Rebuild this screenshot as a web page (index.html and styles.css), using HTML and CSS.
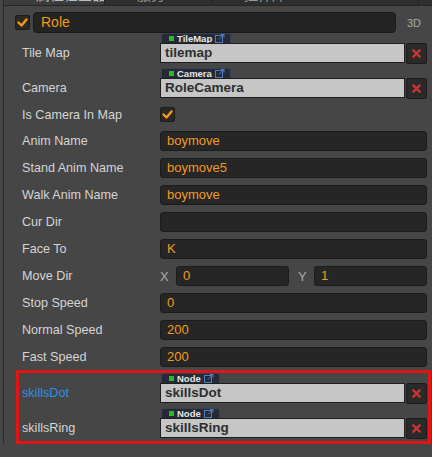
FILE: index.html
```html
<!DOCTYPE html>
<html>
<head>
<meta charset="utf-8">
<link rel="stylesheet" href="styles.css">
</head>
<body>
<div class="frame">
  <div class="tabbar">
    <div class="tab active"><span class="tab-ico ring"></span>属性检查器</div>
    <div class="tab"><span class="tab-ico grid"></span>服务</div>
    <div class="tab"><span class="tab-ico box"></span>控件库</div>
  </div>
  <div class="panel">
    <div class="header">
      <span class="check"><svg viewBox="0 0 15 15" width="15" height="15"><polyline points="3.5,7.5 6.5,10.5 11.5,4.5" /></svg></span>
      <div class="name">Role</div>
      <span class="mode">3D</span>
    </div>

    <div class="row obj first">
      <div class="label">Tile Map</div>
      <div class="val">
        <span class="tag"><i class="dot"></i>TileMap<svg class="link" viewBox="0 0 10 9" width="10" height="9"><rect x="0.5" y="1.5" width="7" height="7" /><path d="M4 5.5 L9 0.5 M6 0.5 H9 V3.5" /></svg></span>
        <div class="objline"><div class="objfield">tilemap</div><span class="del"><svg viewBox="0 0 10 10" width="9" height="9"><path d="M1.5 1.5 L8.5 8.5 M8.5 1.5 L1.5 8.5" /></svg></span></div>
      </div>
    </div>

    <div class="row obj">
      <div class="label">Camera</div>
      <div class="val">
        <span class="tag"><i class="dot"></i>Camera<svg class="link" viewBox="0 0 10 9" width="10" height="9"><rect x="0.5" y="1.5" width="7" height="7" /><path d="M4 5.5 L9 0.5 M6 0.5 H9 V3.5" /></svg></span>
        <div class="objline"><div class="objfield">RoleCamera</div><span class="del"><svg viewBox="0 0 10 10" width="9" height="9"><path d="M1.5 1.5 L8.5 8.5 M8.5 1.5 L1.5 8.5" /></svg></span></div>
      </div>
    </div>

    <div class="row bool">
      <div class="label">Is Camera In Map</div>
      <div class="val"><span class="check"><svg viewBox="0 0 15 15" width="15" height="15"><polyline points="3.5,7.5 6.5,10.5 11.5,4.5" /></svg></span></div>
    </div>

    <div class="row"><div class="label">Anim Name</div><div class="val"><div class="input">boymove</div></div></div>
    <div class="row"><div class="label">Stand Anim Name</div><div class="val"><div class="input">boymove5</div></div></div>
    <div class="row"><div class="label">Walk Anim Name</div><div class="val"><div class="input">boymove</div></div></div>
    <div class="row"><div class="label">Cur Dir</div><div class="val"><div class="input"></div></div></div>
    <div class="row"><div class="label">Face To</div><div class="val"><div class="input">K</div></div></div>
    <div class="row">
      <div class="label">Move Dir</div>
      <div class="val vec">
        <span class="axis">X</span><div class="input">0</div>
        <span class="axis y">Y</span><div class="input">1</div>
      </div>
    </div>
    <div class="row"><div class="label">Stop Speed</div><div class="val"><div class="input">0</div></div></div>
    <div class="row"><div class="label">Normal Speed</div><div class="val"><div class="input">200</div></div></div>
    <div class="row"><div class="label">Fast Speed</div><div class="val"><div class="input">200</div></div></div>

    <div class="highlight">
      <div class="row obj first">
        <div class="label blue">skillsDot</div>
        <div class="val">
          <span class="tag"><i class="dot"></i>Node<svg class="link" viewBox="0 0 10 9" width="10" height="9"><rect x="0.5" y="1.5" width="7" height="7" /><path d="M4 5.5 L9 0.5 M6 0.5 H9 V3.5" /></svg></span>
          <div class="objline"><div class="objfield">skillsDot</div><span class="del"><svg viewBox="0 0 10 10" width="9" height="9"><path d="M1.5 1.5 L8.5 8.5 M8.5 1.5 L1.5 8.5" /></svg></span></div>
        </div>
      </div>
      <div class="row obj">
        <div class="label">skillsRing</div>
        <div class="val">
          <span class="tag"><i class="dot"></i>Node<svg class="link" viewBox="0 0 10 9" width="10" height="9"><rect x="0.5" y="1.5" width="7" height="7" /><path d="M4 5.5 L9 0.5 M6 0.5 H9 V3.5" /></svg></span>
          <div class="objline"><div class="objfield">skillsRing</div><span class="del"><svg viewBox="0 0 10 10" width="9" height="9"><path d="M1.5 1.5 L8.5 8.5 M8.5 1.5 L1.5 8.5" /></svg></span></div>
        </div>
      </div>
    </div>
  </div>
</div>
</body>
</html>
```

FILE: styles.css
```css
html, body {
  margin: 0;
  padding: 0;
  background: #464646;
  height: 100%;
  overflow: hidden;
}

body {
  font-family: "Liberation Sans", "Noto Sans CJK SC", sans-serif;
  font-size: 13px;
  color: #d4d4d4;
}

.frame {
  margin-left: 3px;
  border-left: 1px solid #2a2a2a;
  min-height: 100%;
}

.tabbar {
  display: flex;
  height: 23px;
  margin-top: -18px;
  background: #2f2f2f;
  border-bottom: 1px solid #262626;
}

.tab {
  display: flex;
  flex: none;
  align-items: center;
  gap: 6px;
  padding-left: 16px;
  width: 84px;
  white-space: nowrap;
  overflow: hidden;
  color: #9a9a9a;
  font-size: 14px;
  border-right: 1px solid #222;
}

.tab.active {
  background: #3c3c3c;
  color: #bdbdbd;
}

.tab + .tab { width: 90px; }
.tab:last-child { width: 190px; }

.tab-ico {
  width: 10px;
  height: 10px;
  flex: none;
  border: 1px solid #888;
  box-sizing: border-box;
}

.tab-ico.ring { border-radius: 50%; border-width: 2px; }

.panel {
  padding-top: 6px;
}

.header {
  display: flex;
  align-items: center;
  height: 21px;
  padding-left: 11px;
}

.check {
  width: 15px;
  height: 15px;
  flex: none;
  border-radius: 3px;
  background: #2c2824;
  box-shadow: inset 0 0 0 1px #1c1c1c;
  display: flex;
}

.check polyline {
  fill: none;
  stroke: #f29b1e;
  stroke-width: 2.4;
  stroke-linecap: round;
  stroke-linejoin: round;
}

.name {
  flex: 1;
  margin-left: 3px;
  height: 21px;
  box-sizing: border-box;
  background: #242424;
  border: 1px solid #1a1a1a;
  border-radius: 4px;
  color: #f29b1e;
  font-size: 14px;
  line-height: 19px;
  padding-left: 7px;
}

.mode {
  width: 36px;
  text-align: center;
  font-size: 11px;
  color: #a8a8a8;
}

.row {
  display: flex;
  align-items: center;
  height: 20px;
  margin-top: 7px;
  padding-left: 18px;
  padding-right: 5px;
}

.row.bool { height: 19px; }

.row.obj {
  height: auto;
  align-items: flex-end;
  margin-top: 5px;
}

.row.first { margin-top: 0; }

.label {
  width: 138px;
  flex: none;
  font-size: 12.6px;
  line-height: 20px;
  white-space: nowrap;
}

.label.blue { color: #2f8fe6; }

.val {
  flex: 1;
  display: flex;
  align-items: center;
}

.row.obj .val {
  flex-direction: column;
  align-items: flex-start;
}

.input {
  flex: 1;
  height: 20px;
  box-sizing: border-box;
  background: #262626;
  border: 1px solid #1c1c1c;
  border-radius: 3px;
  color: #f29b1e;
  line-height: 18px;
  padding-left: 6px;
}

.vec .axis {
  width: 16px;
  flex: none;
  color: #ababab;
}

.vec .axis.y { margin-left: 9px; }

.tag {
  display: flex;
  align-items: center;
  height: 10px;
  box-sizing: border-box;
  padding: 0 5px 0 7px;
  margin-left: 1px;
  background: #242b36;
  border: 1px solid #384252;
  border-bottom: none;
  border-radius: 3px 3px 0 0;
  color: #e6e6e6;
  font-size: 9.5px;
  font-weight: bold;
  line-height: 9px;
}

.tag .dot {
  width: 5px;
  height: 5px;
  background: #2fb82f;
  margin-right: 3px;
}

.tag .link {
  margin-left: 3px;
}

.tag .link rect, .tag .link path {
  fill: none;
  stroke: #4d7fbf;
  stroke-width: 1;
}

.objline {
  display: flex;
  align-items: center;
  width: 100%;
  height: 20px;
}

.objfield {
  flex: 1;
  height: 20px;
  box-sizing: border-box;
  background: #c6c6c6;
  border: 1px solid #1e1e1e;
  color: #2e2e2e;
  font-weight: bold;
  font-size: 13.5px;
  line-height: 18px;
  padding-left: 4px;
}

.del {
  width: 21px;
  height: 21px;
  margin-left: 1px;
  flex: none;
  background: #2a2a2a;
  border: 1px solid #1c1c1c;
  box-sizing: border-box;
  border-radius: 2px;
  display: flex;
  align-items: center;
  justify-content: center;
}

.del path {
  stroke: #cc3333;
  stroke-width: 2.6;
  stroke-linecap: round;
}

.highlight {
  margin: 3px 1px 0 12px;
  border: 3px solid #e01515;
  padding: 0 0 3px 0;
}

.highlight .row {
  padding-left: 3px;
  padding-right: 1px;
}
```
